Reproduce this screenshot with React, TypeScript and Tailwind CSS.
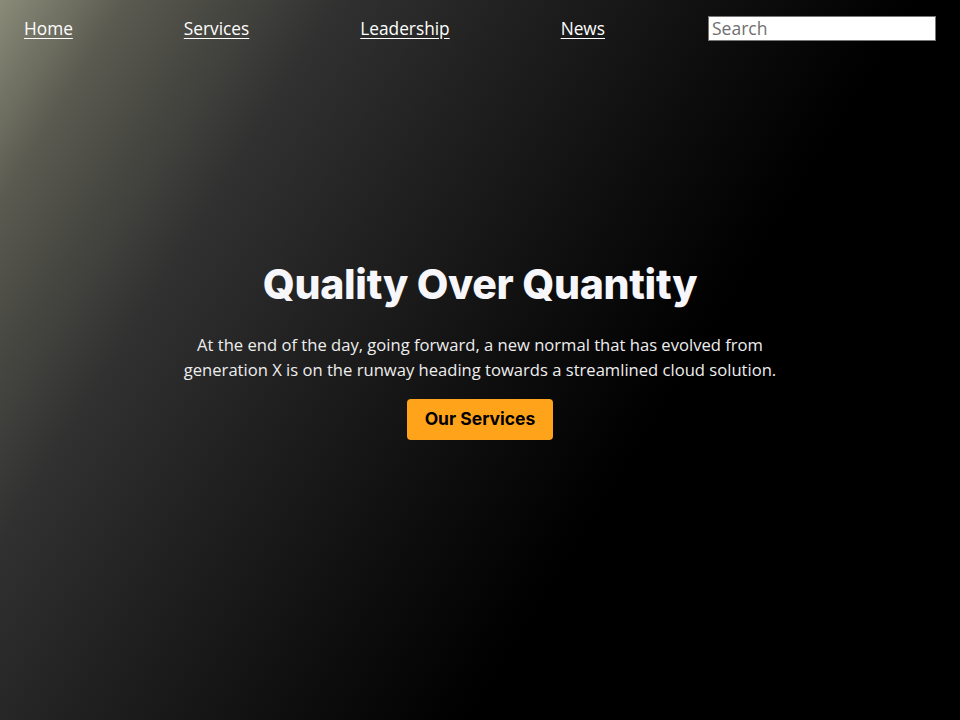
import React from "react";

export default function App() {
  const links = ["Home", "Services", "Leadership", "News"];
  return (
    <div
      className="w-[960px] h-[720px] flex flex-col bg-[linear-gradient(122deg,#8b8b79_0%,#5a5a50_9%,#313131_24%,#202020_37%,#0d0d0d_53%,#000000_65%)] font-['Open_Sans',sans-serif] text-white"
    >
      <nav className="flex items-center px-6 pt-4 h-[41px]">
        <div className="flex items-center justify-between w-[581px]">
          {links.map((l) => (
            <a key={l} href="#" className="text-[17.3px] leading-[25px] underline underline-offset-[3px] text-white">
              {l}
            </a>
          ))}
        </div>
        <input
          placeholder="Search"
          className="ml-auto w-[228px] h-[25px] bg-white border border-[#777] px-[3px] text-[17.5px] text-black placeholder:text-[#6f6f6f] outline-none font-['Open_Sans',sans-serif]"
        />
      </nav>
      <main className="flex flex-col items-center pt-[218px]">
        <h1 className="font-['Inter',sans-serif] font-extrabold text-[41px] leading-[50px] tracking-[-0.3px] text-[#f6f6fb]">
          Quality Over Quantity
        </h1>
        <p className="mt-[23px] w-[600px] text-center text-[16.6px] leading-[25px] text-[#eeeeee]">
          At the end of the day, going forward, a new normal that has evolved from generation X is on the runway heading towards a streamlined cloud solution.
        </p>
        <button className="mt-[17px] w-[146px] h-[41px] rounded-[4px] bg-[#ffa31a] text-black font-['Inter',sans-serif] font-bold text-[17.5px]">
          Our Services
        </button>
      </main>
    </div>
  );
}
